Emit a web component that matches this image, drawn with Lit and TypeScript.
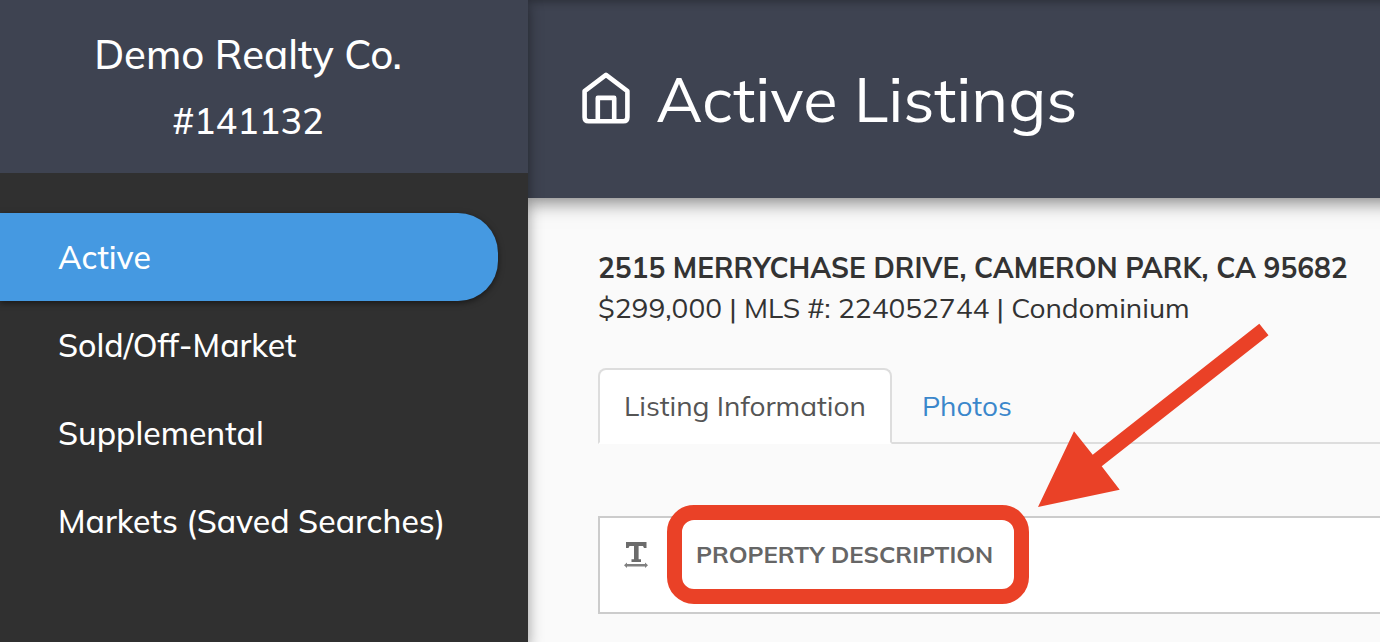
import { LitElement, html, css } from "lit";
import { customElement } from "lit/decorators.js";

@customElement("app-root")
export class AppRoot extends LitElement {
  static styles = css`
    :host {
      display: block;
      font-family: Mulish, Muli, Lato, sans-serif;
      font-size: 28px;
      line-height: 40px;
      color: #333;
    }
    * { box-sizing: border-box; }
    a { color: inherit; text-decoration: none; }
    h1, h2, p { margin: 0; font-weight: 400; }
    .shell { display: flex; min-height: 100vh; overflow: hidden; background: #fafafa; }
    .sidebar {
      flex: 0 0 528px;
      position: relative;
      z-index: 2;
      background: #303030;
      color: #fff;
      box-shadow: 0 4px 14px rgba(0, 0, 0, 0.4);
    }
    .office { background: #3e4351; padding: 22px 32px 17px 0; text-align: center; }
    .name, .number, .link { font-weight: 500; }
    .name { font-size: 40px; line-height: 64px; }
    .number { font-size: 36px; line-height: 70px; }
    .nav { display: flex; flex-direction: column; padding: 40px 30px 0 0; }
    .link { padding: 0 0 0 58px; font-size: 32px; line-height: 88px; border-radius: 0 40px 40px 0; white-space: nowrap; }
    .current { background: #4599e1; box-shadow: 0 2px 6px rgba(0, 0, 0, 0.5); }
    .main { flex: 1; min-width: 0; }
    .banner {
      display: flex;
      align-items: center;
      gap: 24px;
      height: 198px;
      margin-right: -20px;
      padding: 0 52px;
      background: #3e4351;
      color: #fff;
      box-shadow: 0 0 18px 4px rgba(0, 0, 0, 0.5), inset 0 6px 8px -4px rgba(0, 0, 0, 0.3);
    }
    .house { flex: none; width: 52px; height: 56px; }
    .title { font-size: 63px; line-height: 80px; font-weight: 400; white-space: nowrap; }
    .content { padding: 50px 0 30px 70px; white-space: nowrap; }
    .address { font-size: 28px; font-weight: 700; }
    .tabs { display: flex; margin-top: 40px; border-bottom: 2px solid #ddd; }
    .tab { padding: 0 24px; border: 2px solid transparent; line-height: 72px; color: #3a87cb; margin-bottom: -2px; }
    .open {
      background: #fff;
      color: #555;
      border-color: #ddd;
      border-bottom-color: #fff;
      border-radius: 8px 8px 0 0;
      margin-right: 4px;
    }
    .card {
      position: relative;
      display: flex;
      gap: 46px;
      margin-top: 72px;
      padding: 16px 22px 38px;
      border: 2px solid #ccc;
      border-right: 0;
      background: #fff;
    }
    .type { flex: none; width: 28px; height: 40px; }
    .heading { font-size: 24px; line-height: 40px; font-weight: 700; color: #666; }
    .ring {
      position: absolute;
      left: 67px;
      top: -13px;
      width: 362px;
      height: 99px;
      border: 15px solid #ea4127;
      border-radius: 27px;
    }
    .arrow { position: absolute; left: 436px; top: -198px; width: 236px; height: 190px; }
  `;

  render() {
    return html`
      <div class="shell">
        <aside class="sidebar">
          <div class="office">
            <p class="name">Demo Realty Co.</p>
            <p class="number">#141132</p>
          </div>
          <nav class="nav">
            <a class="link current" href="#active" aria-current="page">Active</a>
            <a class="link" href="#sold">Sold/Off-Market</a>
            <a class="link" href="#supplemental">Supplemental</a>
            <a class="link" href="#markets">Markets (Saved Searches)</a>
          </nav>
        </aside>
        <main class="main">
          <header class="banner">
            <svg class="house" viewBox="0 0 52 56" fill="none" stroke="#fff" stroke-width="4.6" stroke-linejoin="round" aria-hidden="true">
              <path d="M26 3.9 L4.6 20.2 V46.2 Q4.6 50.2 8.6 50.2 H43.4 Q47.4 50.2 47.4 46.2 V20.2 Z" />
              <path d="M17.8 50 V26.9 H34.2 V50" />
            </svg>
            <h1 class="title">Active Listings</h1>
          </header>
          <section class="content">
            <h2 class="address">2515 MERRYCHASE DRIVE, CAMERON PARK, CA 95682</h2>
            <p>$299,000 | MLS #: 224052744 | Condominium</p>
            <nav class="tabs">
              <a class="tab open" href="#information">Listing Information</a>
              <a class="tab" href="#photos">Photos</a>
            </nav>
            <div class="card">
              <svg class="type" viewBox="0 0 28 40" fill="#808080" aria-hidden="true">
                <path fill="#6c6c6c" d="M4 8 H24.5 V14 H22 L21 12 H16.6 V25.3 H19 V28 H9.5 V25.3 H12 V12 H7.5 L6.5 14 H4 Z" />
                <path d="M2 31.2 L5 28.4 V30 H23 V28.4 L26 31.2 L23 34 V32.5 H5 V34 Z" />
              </svg>
              <h2 class="heading">PROPERTY DESCRIPTION</h2>
              <div class="ring"></div>
              <svg class="arrow" viewBox="1036 320 236 190" aria-hidden="true">
                <path fill="#ea4127" d="M1259.3 323.7 L1268.5 335.3 L1101.7 466.3 L1119.7 489.7 L1038 507 L1074 431.3 L1092.7 454.7 Z" />
              </svg>
            </div>
          </section>
        </main>
      </div>
    `;
  }
}
